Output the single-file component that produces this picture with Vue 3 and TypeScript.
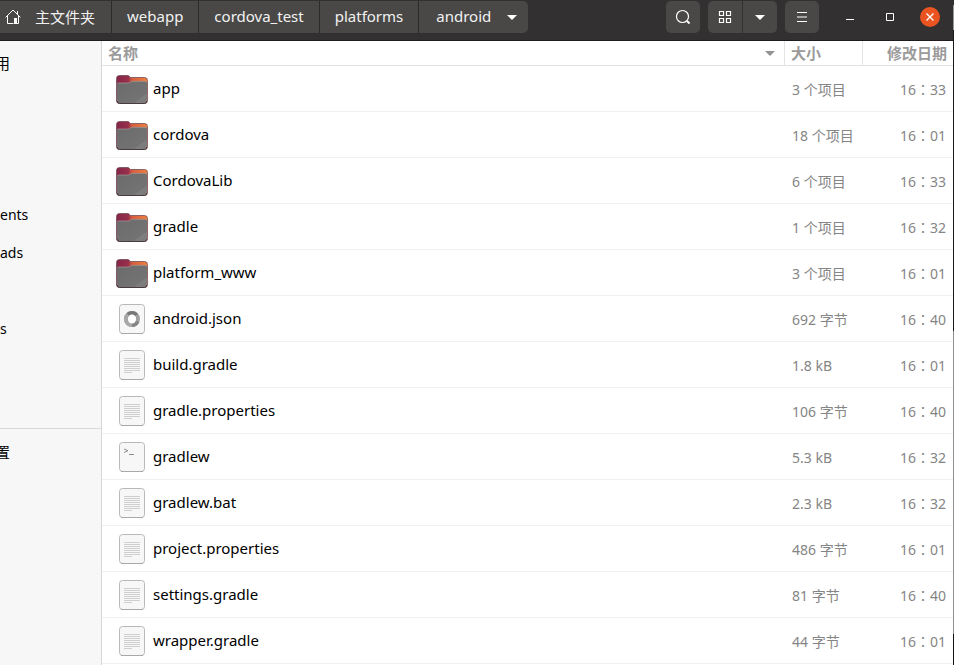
<script setup lang="ts">
type FileKind = 'folder' | 'json' | 'text' | 'script'

interface Entry {
  name: string
  kind: FileKind
  size: string
  modified: string
}

interface Place {
  label: string
  clipped?: boolean
  divided?: boolean
}

const crumbs: string[] = ['webapp', 'cordova_test', 'platforms']

const places: Place[] = [
  { label: '用', clipped: true },
  { label: '' },
  { label: '' },
  { label: '' },
  { label: 'ents' },
  { label: 'ads' },
  { label: '' },
  { label: 's' },
  { label: '' },
  { label: '' },
  { label: '置', clipped: true, divided: true },
]

const entries: Entry[] = [
  { name: 'app', kind: 'folder', size: '3 个项目', modified: '16：33' },
  { name: 'cordova', kind: 'folder', size: '18 个项目', modified: '16：01' },
  { name: 'CordovaLib', kind: 'folder', size: '6 个项目', modified: '16：33' },
  { name: 'gradle', kind: 'folder', size: '1 个项目', modified: '16：32' },
  { name: 'platform_www', kind: 'folder', size: '3 个项目', modified: '16：01' },
  { name: 'android.json', kind: 'json', size: '692 字节', modified: '16：40' },
  { name: 'build.gradle', kind: 'text', size: '1.8 kB', modified: '16：01' },
  { name: 'gradle.properties', kind: 'text', size: '106 字节', modified: '16：40' },
  { name: 'gradlew', kind: 'script', size: '5.3 kB', modified: '16：32' },
  { name: 'gradlew.bat', kind: 'text', size: '2.3 kB', modified: '16：32' },
  { name: 'project.properties', kind: 'text', size: '486 字节', modified: '16：01' },
  { name: 'settings.gradle', kind: 'text', size: '81 字节', modified: '16：40' },
  { name: 'wrapper.gradle', kind: 'text', size: '44 字节', modified: '16：01' },
]
</script>

<template>
  <div class="screen">
    <div class="window">
      <header class="titlebar">
        <nav class="path">
          <button class="crumb home" type="button">
            <svg width="16" height="16" viewBox="0 0 16 16" fill="none" stroke="#fff">
              <path d="M.6 8.4 8 1l7.4 7.4M2.5 7v7.5h6M13.500 7v7.500H12M12.500 5V2" />
              <path d="M9 9h3v6H9z" fill="#fff" stroke="none" />
            </svg>
            <span>主文件夹</span>
          </button>
          <button v-for="crumb in crumbs" :key="crumb" class="crumb" type="button">
            <span class="latin">{{ crumb }}</span>
          </button>
          <button class="crumb current" type="button">
            <span class="latin">android</span>
            <svg width="10" height="5" viewBox="0 0 10 5"><path d="M0 0h10L5 5z" fill="#fff" /></svg>
          </button>
        </nav>
        <div class="tools">
          <button class="tool" type="button" aria-label="search">
            <svg width="16" height="16" viewBox="0 0 16 16" fill="none" stroke="#fff">
              <circle cx="7.500" cy="7.500" r="6" stroke-width="1.200" />
              <path d="m12 12 2.500 2.500" stroke-width="2" />
            </svg>
          </button>
          <div class="pair">
            <button class="tool" type="button" aria-label="grid">
              <svg width="14" height="14" viewBox="0 0 14 14" fill="none" stroke="#fff" stroke-width="1.200">
                <path d="M1.500 1.500h4v4h-4zM8.500 1.500h4v4h-4zM1.500 8.500h4v4h-4zM8.500 8.500h4v4h-4z" />
              </svg>
            </button>
            <button class="tool" type="button" aria-label="view">
              <svg width="10" height="5" viewBox="0 0 10 5"><path d="M0 0h10L5 5z" fill="#fff" /></svg>
            </button>
          </div>
          <button class="tool" type="button" aria-label="menu">
            <svg width="10" height="10" viewBox="0 0 10 10"><path d="M0 .5h10M0 5h10M0 9.500h10" stroke="#fff" /></svg>
          </button>
        </div>
        <div class="controls">
          <button class="control" type="button" aria-label="minimize">
            <svg width="20" height="20" viewBox="0 0 20 20"><path d="M6 12.500h8" stroke="#fff" /></svg>
          </button>
          <button class="control" type="button" aria-label="maximize">
            <svg width="20" height="20" viewBox="0 0 20 20"><path d="M6.500 6.500h7v7h-7z" fill="none" stroke="#fff" /></svg>
          </button>
          <button class="control close" type="button" aria-label="close">
            <svg width="20" height="20" viewBox="0 0 20 20"><path d="m6.500 6.500 7 7M13.500 6.500l-7 7" stroke="#fff" stroke-width="1.400" /></svg>
          </button>
        </div>
      </header>

      <div class="body">
        <aside class="sidebar">
          <ul>
            <li v-for="(place, i) in places" :key="i" :class="{ divided: place.divided }">
              <span :class="{ clipped: place.clipped }">{{ place.label }}</span>
            </li>
          </ul>
        </aside>

        <main class="files">
          <table>
            <thead>
              <tr>
                <th class="name" scope="col">
                  <div class="heading">
                    <span>名称</span>
                    <svg width="10" height="5" viewBox="0 0 10 5"><path d="M0 0h10L5 5z" fill="#929292" /></svg>
                  </div>
                </th>
                <th class="size" scope="col">大小</th>
                <th class="modified" scope="col">修改日期</th>
              </tr>
            </thead>
            <tbody>
              <tr v-for="entry in entries" :key="entry.name">
                <td class="name">
                  <div class="file">
                    <svg v-if="entry.kind === 'folder'" width="32" height="32" viewBox="0 0 32 32">
                      <defs>
                        <linearGradient id="tab" x2="1">
                          <stop offset="0" stop-color="#84264a" />
                          <stop offset=".38" stop-color="#97304b" />
                          <stop offset=".5" stop-color="#d65c3d" />
                          <stop offset="1" stop-color="#f0803f" />
                        </linearGradient>
                        <linearGradient id="front" x2="1" y2="1">
                          <stop offset="0" stop-color="#6b6b6b" />
                          <stop offset=".78" stop-color="#737373" />
                          <stop offset=".79" stop-color="#7e7e7e" />
                          <stop offset="1" stop-color="#7a7a7a" />
                        </linearGradient>
                      </defs>
                      <path d="M3.500 2.500H12q1 0 2.200 2h14.300q3 0 3 3v20q0 3-3 3h-25q-3 0-3-3v-22q0-3 3-3z" fill="url(#tab)" stroke="#65434b" stroke-width=".7" />
                      <path d="M1 12q0-2 1.500-2h10q1 0 2-1 .7-.7 2-.7H29q2 0 2 1.700v17.500q0 2.500-2.500 2.500h-25Q1 30 1 27.500z" fill="url(#front)" />
                      <path d="M1.500 11q0-1 1-1H12q1.500 0 2.500-1 .7-.7 2-.7H29q1.500 0 1.700 1" fill="none" stroke="#a89a98" stroke-width=".7" />
                      <path d="M1 28q.3 2.500 2.500 2.500h25q2.200 0 2.500-2.500" fill="none" stroke="#493c3f" />
                    </svg>
                    <svg v-else width="32" height="32" viewBox="0 0 32 32">
                      <rect x="3.500" y="1.500" width="25" height="29" rx="3" fill="#f7f7f7" stroke="#b9b9b9" />
                      <path d="M5 30.500h22" stroke="#a8a8a8" />
                      <path v-if="entry.kind === 'text'" d="M8 9.500h16M8 11.500h16M8 13.500h16M8 15.500h16M8 17.500h16M8 19.500h16M8 21.500h16M8 23.500h8" stroke="#cfcfcf" />
                      <path v-else-if="entry.kind === 'script'" d="m8 8 4 1.700-4 1.800M13 13.500h5" fill="none" stroke="#8c8c8c" />
                      <g v-else fill="none" stroke-width="4">
                        <circle cx="16" cy="16" r="6" stroke="#a1a1a1" />
                        <path d="M16 22a6 6 0 0 1-4-10.500" stroke="#a8a8a8" />
                        <path d="M12 11.500A6 6 0 0 1 20.500 12" stroke="#777" />
                        <path d="M16 22a6 6 0 0 0 5.500-3.500" stroke="#858585" />
                        <ellipse cx="16" cy="16" rx="4" ry="4.500" fill="#fff" stroke="none" />
                      </g>
                    </svg>
                    <span class="latin">{{ entry.name }}</span>
                  </div>
                </td>
                <td class="size">{{ entry.size }}</td>
                <td class="modified">{{ entry.modified }}</td>
              </tr>
            </tbody>
          </table>
        </main>
      </div>
    </div>
    <div class="edge"></div>
  </div>
</template>

<style>
body {
  margin: 0;
  overflow: hidden;
}
</style>

<style scoped>
* {
  box-sizing: border-box;
}

.screen {
  display: grid;
  grid-template-columns: minmax(0, 1fr) 1px;
  height: 100vh;
  overflow: hidden;
  font-family: "Noto Sans", "Noto Sans CJK SC", sans-serif;
  font-size: 14px;
  line-height: 20px;
  color: #000;
}

.window {
  display: flex;
  flex-direction: column;
  min-height: 0;
  background: #fff;
}

.edge {
  background: linear-gradient(#2b292a 5px, #999 5px 30px, #1b191a 30px 331px, #909090 331px 634px, #111 634px);
}

.titlebar {
  display: flex;
  flex: none;
  align-items: flex-start;
  height: 41px;
  padding: 1px 13px 0 0;
  background: #323030;
  border-bottom: 1px solid #1e1c1d;
}

button {
  display: flex;
  align-items: center;
  justify-content: center;
  margin: 0;
  padding: 0;
  border: 0;
  font: inherit;
  color: #f2f2f2;
  background: #494846;
}

.path {
  display: flex;
  height: 32px;
  overflow: hidden;
  border-radius: 0 5px 5px 0;
}

.crumb {
  padding: 0 15px;
  border-right: 1px solid #2c2a2a;
  font-size: 15px;
}

.latin {
  padding-bottom: 2px;
}

.home {
  gap: 14px;
  padding: 0 16px 0 5px;
}

.current {
  gap: 16px;
  padding: 0 11px 0 17px;
  border-right: 0;
}

.tools {
  display: flex;
  gap: 8px;
  margin-left: auto;
}

.tool {
  width: 34px;
  height: 32px;
  border-radius: 5px;
}

.pair {
  display: flex;
  gap: 1px;
}

.pair .tool:first-child {
  border-radius: 5px 0 0 5px;
}

.pair .tool:last-child {
  border-radius: 0 5px 5px 0;
}

.controls {
  display: flex;
  gap: 20px;
  align-items: center;
  height: 32px;
  margin-left: 21px;
}

.control {
  width: 20px;
  height: 20px;
  background: none;
  border-radius: 50%;
}

.close {
  background: #e95420;
}

.body {
  display: flex;
  flex: 1;
  min-height: 0;
}

.sidebar {
  flex: 0 0 102px;
  padding-top: 3px;
  overflow: hidden;
  background: #f7f7f7;
  border-right: 1px solid #d6d6d6;
}

ul {
  margin: 0;
  padding: 0;
  list-style: none;
}

li {
  display: flex;
  align-items: center;
  height: 38px;
}

.divided {
  height: 46px;
  margin-top: 4px;
  border-top: 1px solid #d9d9d9;
}

.clipped {
  margin-left: -5px;
  font-size: 15px;
}

.files {
  flex: 1;
  min-width: 0;
  overflow: hidden;
}

table {
  width: 100%;
  table-layout: fixed;
  border-spacing: 0;
}

th {
  height: 25px;
  padding: 0 6px;
  font-size: 15px;
  font-weight: 700;
  color: #9b9b9b;
  text-align: left;
  border-right: 1px solid #e4e4e4;
  border-bottom: 1px solid #e2e2e2;
}

th.size {
  width: 78px;
}

th.modified {
  width: 90px;
  border-right: 0;
  text-align: right;
}

.heading {
  display: flex;
  align-items: center;
  justify-content: space-between;
  padding-right: 3px;
}

td {
  height: 46px;
  padding: 2px 7px 0;
  color: #858585;
  white-space: nowrap;
  border-bottom: 1px solid #f1f1f1;
}

td.name {
  padding: 0 7px 0 14px;
  font-size: 15px;
  color: #000;
}

td.modified {
  font-family: "Noto Sans", "Noto Sans CJK TC", sans-serif;
  text-align: right;
}

.file {
  display: flex;
  gap: 5px;
  align-items: center;
}
</style>
